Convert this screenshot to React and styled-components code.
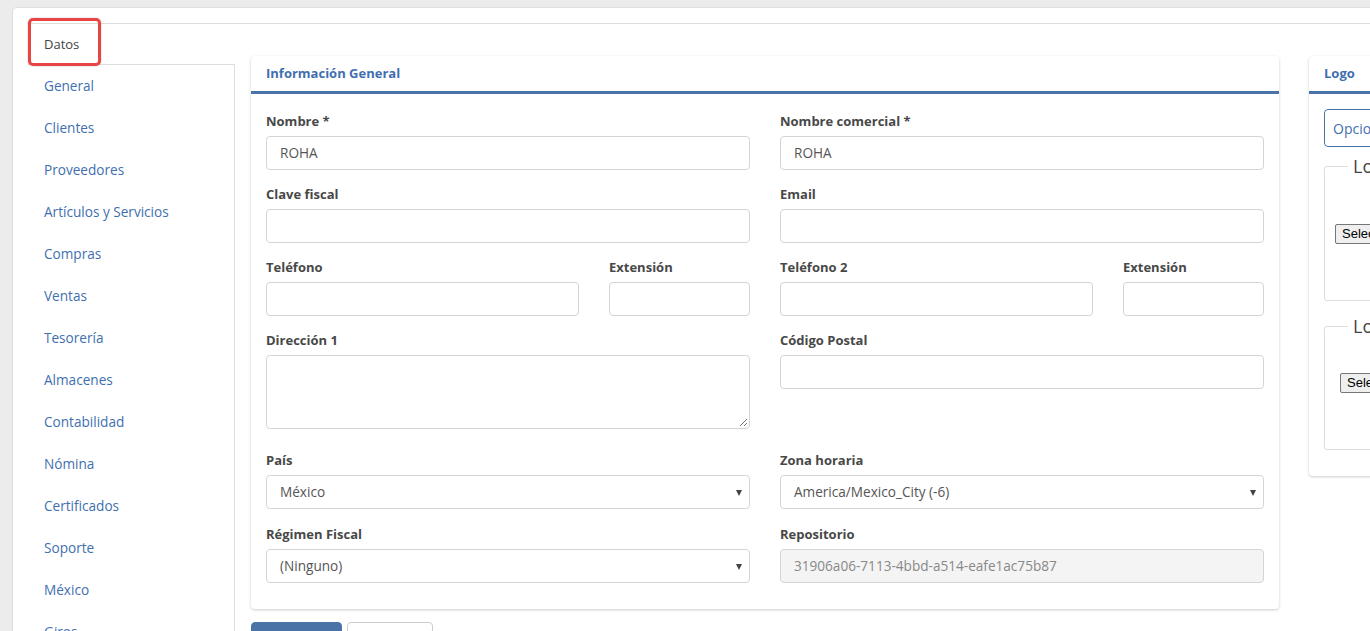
import React from 'react';
import styled, { createGlobalStyle } from 'styled-components';

const colors = {
    page: '#ececec',
    line: '#dddddd',
    blue: '#3f6faf',
    blueDark: '#4a74a8',
    label: '#484848',
    text: '#555555',
    inputBorder: '#d4d4d4',
    red: '#e84443',
};

const GlobalStyle = createGlobalStyle`
    html, body {
        margin: 0;
        padding: 0;
        background: ${colors.page};
        overflow: hidden;
        font-family: "Open Sans", "Noto Sans", sans-serif;
        font-size: 13px;
    }
`;

const Shell = styled.div`
    margin: 8px 0 0 13px;
    width: 1700px;
    min-height: 700px;
    background: #fff;
    border-radius: 4px 0 0 0;
    box-shadow: 0 0 2px rgba(0, 0, 0, 0.18);
    padding: 15px 15px 0 15px;
    box-sizing: border-box;
`;

const Layout = styled.div`
    display: flex;
    align-items: flex-start;
    border-top: 1px solid ${colors.line};
`;

const SideColumn = styled.div`
    width: 207px;
    flex-shrink: 0;
    display: flex;
    flex-direction: column;
`;

const Tab = styled.div`
    position: relative;
    width: 73px;
    height: 40px;
    line-height: 40px;
    padding-left: 16px;
    box-sizing: border-box;
    color: #444;
    background: #fff;
    z-index: 1;

    &::after {
        content: "";
        position: absolute;
        top: -6px;
        left: 0;
        right: 0;
        bottom: -2px;
        border: 3px solid ${colors.red};
        border-radius: 5px;
        box-shadow: 0 0 2px rgba(0, 0, 0, 0.25);
    }
`;

const SideList = styled.ul`
    list-style: none;
    margin: 0;
    padding: 0;
    border-top: 1px solid ${colors.line};
    border-right: 1px solid ${colors.line};
    min-height: 640px;
`;

const SideItem = styled.li`
    height: 42px;
    line-height: 42px;
    padding-left: 16px;
    color: ${colors.blue};
    font-size: 13.6px;
`;

const Content = styled.div`
    display: flex;
    align-items: flex-start;
    gap: 30px;
    margin: 32px 0 0 16px;
`;

const MainColumn = styled.div`
    width: 1028px;
    flex-shrink: 0;
`;

const Card = styled.div`
    width: ${p => p.$width}px;
    background: #fff;
    border-radius: 4px;
    box-shadow: 0 1px 3px rgba(0, 0, 0, 0.2);
    flex-shrink: 0;
`;

const CardHeader = styled.div`
    height: 35px;
    line-height: 35px;
    padding: 0 15px;
    border-bottom: 3px solid ${colors.blueDark};
    color: ${colors.blue};
    font-weight: 700;
`;

const CardBody = styled.div`
    padding: ${p => p.$padding};
`;

const FormGrid = styled.div`
    display: grid;
    grid-template-columns: ${p => p.$cols || '1fr 1fr'};
    column-gap: 30px;
    align-items: start;
`;

const Field = styled.div`
    margin-bottom: ${p => p.$gap || 15}px;
`;

const Label = styled.label`
    display: block;
    line-height: 18px;
    margin-bottom: 6px;
    color: ${colors.label};
    font-weight: 700;
`;

const Input = styled.div`
    height: 34px;
    line-height: 32px;
    border: 1px solid ${colors.inputBorder};
    border-radius: 4px;
    padding: 0 13px;
    box-sizing: border-box;
    font-size: 13.6px;
    color: ${p => (p.$disabled ? '#888' : colors.text)};
    background: ${p => (p.$disabled ? '#f4f4f4' : '#fff')};
    white-space: nowrap;
`;

const TextArea = styled.div`
    position: relative;
    height: 74px;
    border: 1px solid ${colors.inputBorder};
    border-radius: 4px;
    box-sizing: border-box;
    margin-bottom: 7px;

    &::after {
        content: "";
        position: absolute;
        right: 2px;
        bottom: 2px;
        width: 7px;
        height: 7px;
        background: linear-gradient(135deg, transparent 45%, #777 45%, #777 55%, transparent 55%, transparent 75%, #777 75%, #777 85%, transparent 85%);
    }
`;

const Select = styled(Input)`
    position: relative;

    &::after {
        content: "";
        position: absolute;
        right: 7px;
        top: 14px;
        border-left: 3.5px solid transparent;
        border-right: 3.5px solid transparent;
        border-top: 6px solid #444;
    }
`;

const Actions = styled.div`
    display: flex;
    gap: 5px;
    margin-top: 13px;
`;

const Button = styled.button`
    width: ${p => p.$width}px;
    height: 34px;
    border-radius: 4px;
    font: inherit;
    border: 1px solid ${p => (p.$primary ? colors.blueDark : '#ccc')};
    background: ${p => (p.$primary ? colors.blueDark : '#fff')};
    color: ${p => (p.$primary ? '#fff' : '#333')};
    padding: 0;
`;

const OptionsButton = styled.button`
    display: block;
    width: 160px;
    height: 38px;
    border: 1px solid ${colors.blueDark};
    border-radius: 4px;
    background: #fff;
    color: ${colors.blue};
    font: inherit;
    font-size: 14px;
    text-align: left;
    padding: 0 8px;
    margin-bottom: 9px;
`;

const LogoSet = styled.fieldset`
    height: ${p => p.$height}px;
    margin: 0 0 ${p => p.$gap}px 0;
    padding: ${p => p.$top}px 10px 0 10px;
    border: 1px solid ${colors.line};
    border-radius: 3px;
    box-sizing: border-box;
`;

const LogoLegend = styled.legend`
    font-size: 18px;
    color: #444;
    padding: 0 5px;
    margin-left: 13px;
    line-height: 20px;
`;

const FileRow = styled.div`
    display: flex;
    align-items: center;
    gap: 6px;
    margin-left: ${p => p.$indent}px;
    font-family: "Liberation Sans", Arial, sans-serif;
    font-size: 13px;
    white-space: nowrap;
`;

const FileButton = styled.span`
    display: inline-block;
    height: 20px;
    line-height: 18px;
    padding: 0 6px;
    box-sizing: border-box;
    border: 1px solid #767676;
    border-radius: 2px;
    background: #efefef;
    color: #000;
`;

const sideItems = [
    'General', 'Clientes', 'Proveedores', 'Artículos y Servicios', 'Compras', 'Ventas',
    'Tesorería', 'Almacenes', 'Contabilidad', 'Nómina', 'Certificados', 'Soporte', 'México', 'Giros',
];

const App = () => {
    return (
        <>
            <GlobalStyle />
            <Shell>
                <Layout>
                    <SideColumn>
                        <Tab>Datos</Tab>
                        <SideList>
                            {sideItems.map(item => <SideItem key={item}>{item}</SideItem>)}
                        </SideList>
                    </SideColumn>

                    <Content>
                        <MainColumn>
                            <Card $width={1028}>
                                <CardHeader>Información General</CardHeader>
                                <CardBody $padding="18px 15px 11px 15px">
                                    <FormGrid>
                                        <Field>
                                            <Label>Nombre *</Label>
                                            <Input>ROHA</Input>
                                        </Field>
                                        <Field>
                                            <Label>Nombre comercial *</Label>
                                            <Input>ROHA</Input>
                                        </Field>
                                        <Field>
                                            <Label>Clave fiscal</Label>
                                            <Input />
                                        </Field>
                                        <Field>
                                            <Label>Email</Label>
                                            <Input />
                                        </Field>
                                        <FormGrid $cols="313px 1fr">
                                            <Field>
                                                <Label>Teléfono</Label>
                                                <Input />
                                            </Field>
                                            <Field>
                                                <Label>Extensión</Label>
                                                <Input />
                                            </Field>
                                        </FormGrid>
                                        <FormGrid $cols="313px 1fr">
                                            <Field>
                                                <Label>Teléfono 2</Label>
                                                <Input />
                                            </Field>
                                            <Field>
                                                <Label>Extensión</Label>
                                                <Input />
                                            </Field>
                                        </FormGrid>
                                        <Field>
                                            <Label>Dirección 1</Label>
                                            <TextArea />
                                        </Field>
                                        <Field>
                                            <Label>Código Postal</Label>
                                            <Input />
                                        </Field>
                                        <Field $gap={16}>
                                            <Label>País</Label>
                                            <Select>México</Select>
                                        </Field>
                                        <Field $gap={16}>
                                            <Label>Zona horaria</Label>
                                            <Select>America/Mexico_City (-6)</Select>
                                        </Field>
                                        <Field>
                                            <Label>Régimen Fiscal</Label>
                                            <Select>(Ninguno)</Select>
                                        </Field>
                                        <Field>
                                            <Label>Repositorio</Label>
                                            <Input $disabled>31906a06-7113-4bbd-a514-eafe1ac75b87</Input>
                                        </Field>
                                    </FormGrid>
                                </CardBody>
                            </Card>
                            <Actions>
                                <Button $primary $width={91}>Guardar</Button>
                                <Button $width={86}>Cancelar</Button>
                            </Actions>
                        </MainColumn>

                        <Card $width={320}>
                            <CardHeader>Logo</CardHeader>
                            <CardBody $padding="15px 15px 6px 15px">
                                <OptionsButton>Opciones</OptionsButton>
                                <LogoSet $height={145} $gap={15} $top={48}>
                                    <LogoLegend>Logotipo</LogoLegend>
                                    <FileRow $indent={0}>
                                        <FileButton>Seleccionar archivo</FileButton>
                                        <span>Ningún archivo seleccionado</span>
                                    </FileRow>
                                </LogoSet>
                                <LogoSet $height={134} $gap={20} $top={37}>
                                    <LogoLegend>Logo reportes</LogoLegend>
                                    <FileRow $indent={5}>
                                        <FileButton>Seleccionar archivo</FileButton>
                                        <span>Ningún archivo seleccionado</span>
                                    </FileRow>
                                </LogoSet>
                            </CardBody>
                        </Card>
                    </Content>
                </Layout>
            </Shell>
        </>
    );
};

export default App;
